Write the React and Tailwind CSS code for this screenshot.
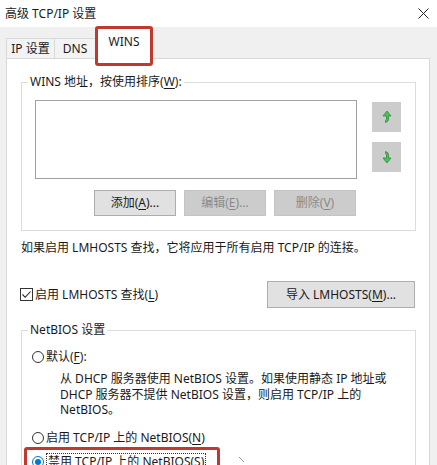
import React from "react";

const U = ({ children }) => <span className="underline underline-offset-2">{children}</span>;

const Radio = ({ checked }) => (
  <span
    className={
      "w-[12px] h-[12px] rounded-full border bg-white flex items-center justify-center shrink-0 " +
      (checked ? "border-[#0078d7]" : "border-[#333333]")
    }
  >
    {checked && <span className="w-[6px] h-[6px] rounded-full bg-[#0078d7]" />}
  </span>
);

const MoveIcon = ({ down }) => (
  <svg width="10" height="14" viewBox="0 0 10 14" className={down ? "-scale-y-100" : ""}>
    <path
      d="M5 1 L9 6 L6.5 6 L6.5 9 Q6.5 12 3.5 12.5 L3.5 10.5 Q4.5 10 4.5 9 L4.5 6 L1 6 Z"
      fill="#4cc25a"
      stroke="#2e8b3a"
      strokeWidth="0.8"
      strokeLinejoin="round"
    />
  </svg>
);

const Btn = ({ children, disabled, className = "" }) => (
  <div
    className={
      "h-[26px] flex items-center justify-center border text-[12px] " +
      (disabled
        ? "bg-[#cccccc] border-[#c4c4c4] text-[#8a8a8a] "
        : "bg-[#e1e1e1] border-[#adadad] text-[#1a1a1a] ") +
      className
    }
  >
    {children}
  </div>
);

export default function App() {
  return (
    <div
      className="w-[437px] h-[465px] overflow-hidden bg-[#f0f0f0] text-[12px] leading-[16px] text-[#1a1a1a]"
      style={{ fontFamily: '"Noto Sans", "Noto Sans CJK SC", sans-serif' }}
    >
      {/* title bar */}
      <div className="h-[27px] bg-white flex items-center justify-between pl-[5px] pr-[8px]">
        <span className="text-[12px]">高级 TCP/IP 设置</span>
        <svg width="11" height="11" viewBox="0 0 11 11">
          <path d="M0.5 0.5 L10.5 10.5 M10.5 0.5 L0.5 10.5" stroke="#222" strokeWidth="1" />
        </svg>
      </div>

      {/* tabs */}
      <div className="h-[31px] flex items-end pl-[6px] relative z-10">
        <div className="h-[20px] w-[49px] border border-b-0 border-[#d9d9d9] bg-[#f3f3f3] flex items-center justify-center">
          IP 设置
        </div>
        <div className="h-[20px] w-[41px] border border-l-0 border-b-0 border-[#d9d9d9] bg-[#f3f3f3] flex items-center justify-center">
          DNS
        </div>
        <div className="relative h-[31px] w-[54px] -mb-px ml-px border border-b-0 border-[#d9d9d9] bg-white flex items-center justify-center pb-[4px]">
          WINS
          <div className="absolute left-[-3px] top-[-3px] w-[58px] h-[40px] border-[3px] border-[#c0392f] rounded-[3px]" />
        </div>
      </div>

      {/* panel */}
      <div className="ml-[6px] w-[424px] h-[420px] bg-white border border-b-0 border-[#d9d9d9] pl-[14px] pr-[13px]">
        <fieldset className="mt-[15px] border border-[#dcdcdc] h-[157px]">
          <legend className="ml-[6px] px-[2px] leading-[16px]">
            WINS 地址，按使用排序(<U>W</U>):
          </legend>
          <div className="flex mt-[10px] ml-[13px]">
            <div className="w-[322px] h-[79px] border border-[#a0a0a0] bg-white" />
            <div className="ml-[15px] mt-[2px] flex flex-col gap-[10px]">
              <div className="w-[29px] h-[30px] bg-[#cccccc] flex items-center justify-center">
                <MoveIcon />
              </div>
              <div className="w-[29px] h-[30px] bg-[#cccccc] flex items-center justify-center">
                <MoveIcon down />
              </div>
            </div>
          </div>
          <div className="flex gap-[8px] ml-[72px] mt-[11px]">
            <Btn className="w-[82px]">
              添加(<U>A</U>)...
            </Btn>
            <Btn disabled className="w-[82px]">
              编辑(<U>E</U>)...
            </Btn>
            <Btn disabled className="w-[82px]">
              删除(<U>V</U>)
            </Btn>
          </div>
        </fieldset>

        <p className="mt-[9px]">如果启用 LMHOSTS 查找，它将应用于所有启用 TCP/IP 的连接。</p>

        <div className="mt-[25px] flex items-center justify-between pr-[1px]">
          <div className="flex items-center gap-[2px] -ml-px">
            <span className="w-[13px] h-[13px] border border-[#333333] bg-white flex items-center justify-center">
              <svg width="11" height="11" viewBox="0 0 11 11">
                <path d="M1.5 5.5 L4.2 8.3 L9.5 2.5" fill="none" stroke="#222" strokeWidth="1.1" />
              </svg>
            </span>
            <span>
              启用 LMHOSTS 查找(<U>L</U>)
            </span>
          </div>
          <Btn className="w-[148px] h-[27px]">
            导入 LMHOSTS(<U>M</U>)...
          </Btn>
        </div>

        <fieldset className="mt-[14px] border border-[#dcdcdc] h-[200px]">
          <legend className="ml-[6px] px-[2px] leading-[16px]">NetBIOS 设置</legend>
          <div className="mt-[11px] ml-[10px] flex items-center gap-[2px]">
            <Radio />
            <span>
              默认(<U>F</U>):
            </span>
          </div>
          <p className="mt-[6px] ml-[38px] leading-[15.5px]">
            从 DHCP 服务器使用 NetBIOS 设置。如果使用静态 IP 地址或
            <br />
            DHCP 服务器不提供 NetBIOS 设置，则启用 TCP/IP 上的
            <br />
            NetBIOS。
          </p>
          <div className="mt-[12px] ml-[10px] flex items-center gap-[2px]">
            <Radio />
            <span>
              启用 TCP/IP 上的 NetBIOS(<U>N</U>)
            </span>
          </div>
          <div className="mt-[7px] ml-[10px] flex items-center gap-[2px] relative">
            <Radio checked />
            <span className="border border-dotted border-[#333] px-px">
              禁用 TCP/IP 上的 NetBIOS(<U>S</U>)
            </span>
            <div className="absolute left-[-8px] top-[-6px] w-[196px] h-[30px] border-[3px] border-[#c0392f] rounded-[3px]" />
            <svg width="8" height="8" viewBox="0 0 8 8" className="absolute left-[206px] top-[3px]">
              <path d="M1 1 L6 6" stroke="#9a9a9a" strokeWidth="1" />
            </svg>
          </div>
        </fieldset>
      </div>
    </div>
  );
}
